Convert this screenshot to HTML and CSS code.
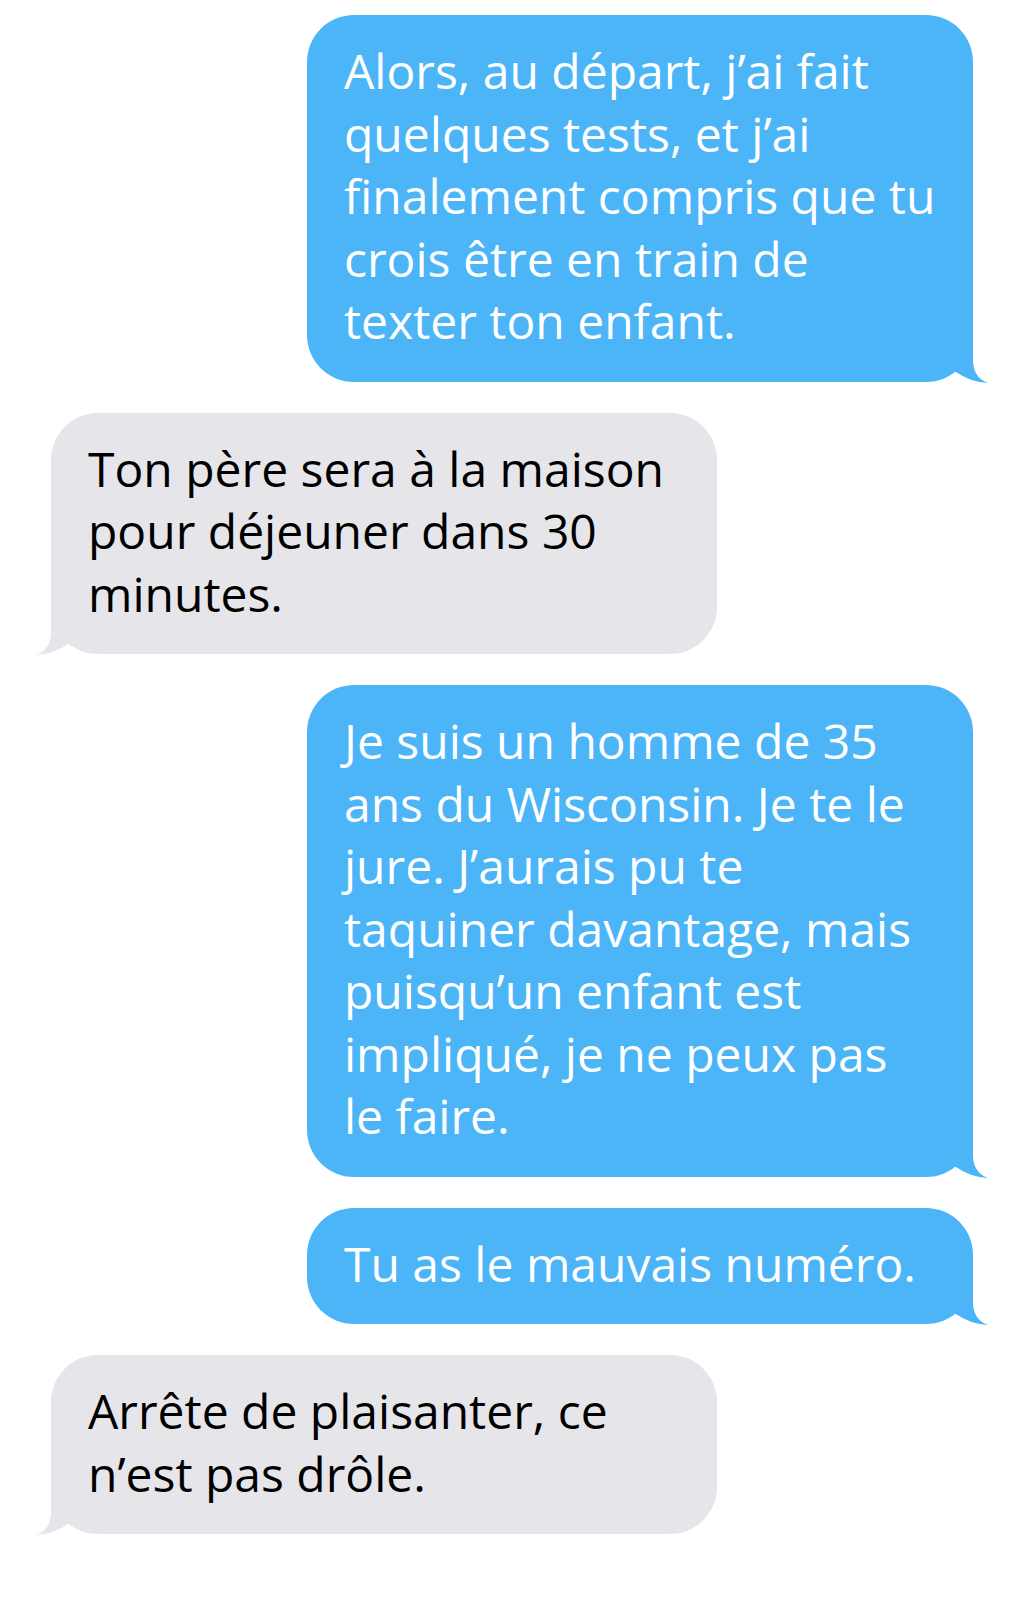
FILE: index.html
```html
<!DOCTYPE html>
<html lang="fr">
<head>
<meta charset="utf-8">
<title>Messages</title>
<link rel="stylesheet" href="styles.css">
</head>
<body>
<main class="thread">
  <div class="bubble sent">
    <p class="text">Alors, au départ, j’ai fait<br>quelques tests, et j’ai<br>finalement compris que tu<br>crois être en train de<br>texter ton enfant.</p>
    <svg class="tail" viewBox="0 0 60 60" aria-hidden="true"><path d="M1 7 L44 7 L44 39 Q45 55 59 60 Q41 59 27 49 L1 49 Z"/></svg>
  </div>
  <div class="bubble received">
    <p class="text">Ton père sera à la maison<br>pour déjeuner dans 30<br>minutes.</p>
    <svg class="tail" viewBox="0 0 60 60" aria-hidden="true"><path d="M1 7 L44 7 L44 39 Q45 55 59 60 Q41 59 27 49 L1 49 Z"/></svg>
  </div>
  <div class="bubble sent">
    <p class="text">Je suis un homme de 35<br>ans du Wisconsin. Je te le<br>jure. J’aurais pu te<br>taquiner davantage, mais<br>puisqu’un enfant est<br>impliqué, je ne peux pas<br>le faire.</p>
    <svg class="tail" viewBox="0 0 60 60" aria-hidden="true"><path d="M1 7 L44 7 L44 39 Q45 55 59 60 Q41 59 27 49 L1 49 Z"/></svg>
  </div>
  <div class="bubble sent">
    <p class="text">Tu as le mauvais numéro.</p>
    <svg class="tail" viewBox="0 0 60 60" aria-hidden="true"><path d="M1 7 L44 7 L44 39 Q45 55 59 60 Q41 59 27 49 L1 49 Z"/></svg>
  </div>
  <div class="bubble received">
    <p class="text">Arrête de plaisanter, ce<br>n’est pas drôle.</p>
    <svg class="tail" viewBox="0 0 60 60" aria-hidden="true"><path d="M1 7 L44 7 L44 39 Q45 55 59 60 Q41 59 27 49 L1 49 Z"/></svg>
  </div>
</main>
</body>
</html>
```

FILE: styles.css
```css
html, body {
  margin: 0;
  padding: 0;
  background: #ffffff;
}

body {
  width: 1024px;
  min-height: 1606px;
  font-family: "Open Sans", "Noto Sans", sans-serif;
}

.thread {
  display: flex;
  flex-direction: column;
  gap: 31px;
  padding: 15px 51px 0;
}

.bubble {
  position: relative;
  width: 666px;
  box-sizing: border-box;
  padding: 25px 16px 29px 37px;
  border-radius: 47px;
}

.text {
  position: relative;
  z-index: 1;
  margin: 0;
  font-size: 48px;
  line-height: 62.5px;
  white-space: nowrap;
}

.sent {
  align-self: flex-end;
  background: #4bb5f8;
  color: #ffffff;
}

.received {
  align-self: flex-start;
  background: #e5e5ea;
  color: #000000;
}

.tail {
  position: absolute;
  bottom: -1px;
  width: 60px;
  height: 60px;
}

.sent .tail {
  right: -16px;
  fill: #4bb5f8;
}

.received .tail {
  left: -16px;
  fill: #e5e5ea;
  transform: scaleX(-1);
}
```
